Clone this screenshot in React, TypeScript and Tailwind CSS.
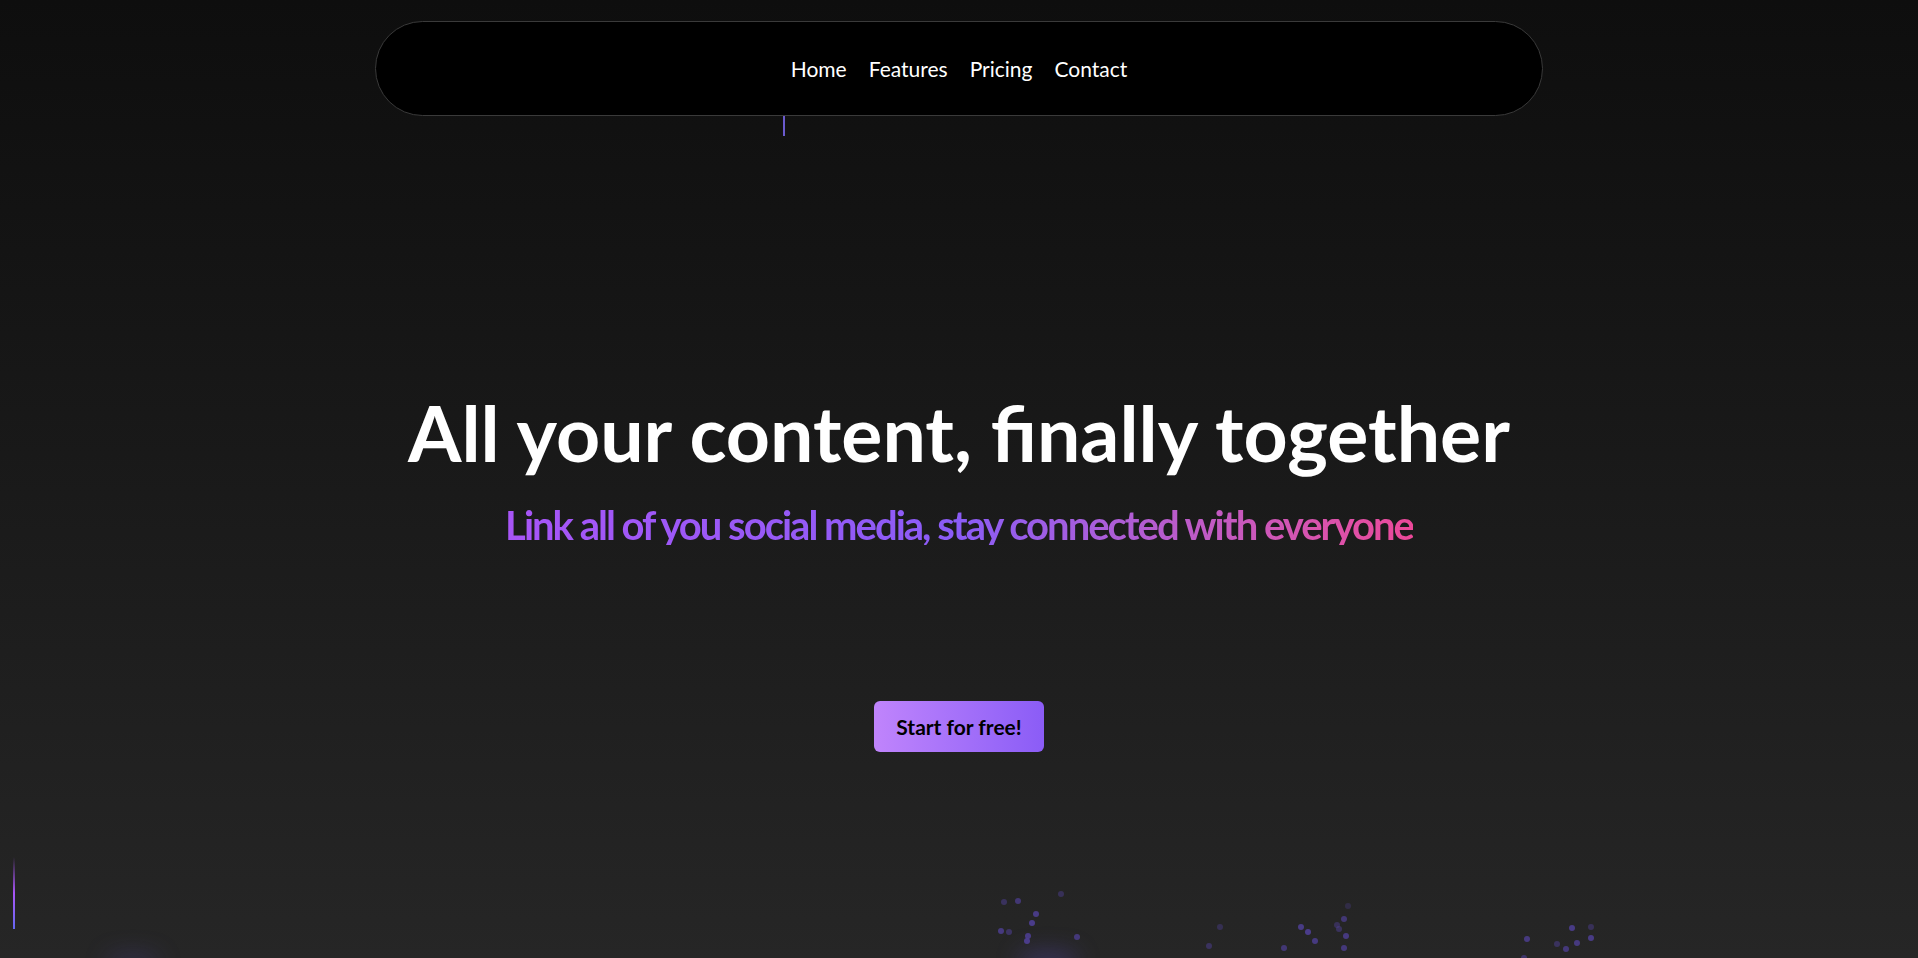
import React from 'react';

const links = ['Home', 'Features', 'Pricing', 'Contact'];

// particules en bas de page [x, y, opacité]
const dots: [number, number, number][] = [
  [1004, 902, 0.5], [1018, 901, 0.7], [1061, 894, 0.45], [1036, 914, 0.85],
  [1032, 923, 0.9], [1001, 931, 0.8], [1009, 932, 0.55], [1028, 936, 0.85],
  [1027, 941, 0.9], [1077, 937, 0.75], [1220, 927, 0.4], [1209, 946, 0.5],
  [1301, 927, 0.85], [1308, 932, 0.9], [1315, 941, 0.8], [1284, 948, 0.7],
  [1344, 919, 0.7], [1337, 925, 0.45], [1339, 929, 0.5], [1346, 936, 0.8],
  [1344, 948, 0.75], [1348, 906, 0.3], [1527, 939, 0.8], [1557, 944, 0.5],
  [1566, 949, 0.75], [1572, 928, 0.85], [1577, 943, 0.8], [1591, 927, 0.45],
  [1591, 938, 0.85], [1524, 958, 0.6],
];

export default function App() {
  return (
    <div
      className="relative h-[958px] w-full overflow-hidden bg-linear-to-b from-[#0e0e0e] to-[#262626] text-white"
      style={{ fontFamily: 'Lato, "Noto Sans", sans-serif' }}
    >
      {/* Navbar */}
      <nav className="mx-auto mt-[21px] flex h-[95px] w-[1168px] items-center justify-center rounded-full border border-[#3a3a3a] bg-black">
        <ul className="flex items-center gap-[22px] text-[21px] text-white">
          {links.map((l) => (
            <li key={l}>
              <a href="#">{l}</a>
            </li>
          ))}
        </ul>
      </nav>

      {/* Hero */}
      <div className="flex flex-col items-center">
        <h1 className="mt-[278px] text-[77px] font-bold leading-none text-white">
          All your content, finally together
        </h1>
        <p className="mt-[34px] bg-linear-to-r from-[#a855f7] via-[#8b5cf6] to-[#ec4899] bg-clip-text text-[40px] font-bold leading-none tracking-tighter text-transparent">
          Link all of you social media, stay connected with everyone
        </p>
        <button className="mt-[156px] flex h-[51px] w-[170px] items-center justify-center rounded-md bg-linear-to-r from-[#c084fc] to-[#8b5cf6] text-[21px] font-bold text-black">
          Start for free!
        </button>
      </div>

      {/* rayons */}
      <div className="absolute left-[783px] top-[116px] h-[20px] w-[2px] bg-[#6a5acd]" />
      <div className="absolute left-[13px] top-[857px] h-[72px] w-[2px] bg-linear-to-b from-transparent via-[#a855f7] to-[#6366f1]" />

      {/* lueurs */}
      <div className="absolute bottom-[-12px] left-[108px] h-[14px] w-[50px] rounded-full bg-[#5a4cc0]/30 blur-md" />
      <div className="absolute bottom-[-12px] left-[1020px] h-[16px] w-[56px] rounded-full bg-[#5a4cc0]/45 blur-md" />

      {dots.map(([x, y, o], i) => (
        <div
          key={i}
          className="absolute h-[6px] w-[6px] rounded-full bg-[#4f3f96] blur-[0.5px]"
          style={{ left: x - 3, top: y - 3, opacity: o }}
        />
      ))}
    </div>
  );
}
